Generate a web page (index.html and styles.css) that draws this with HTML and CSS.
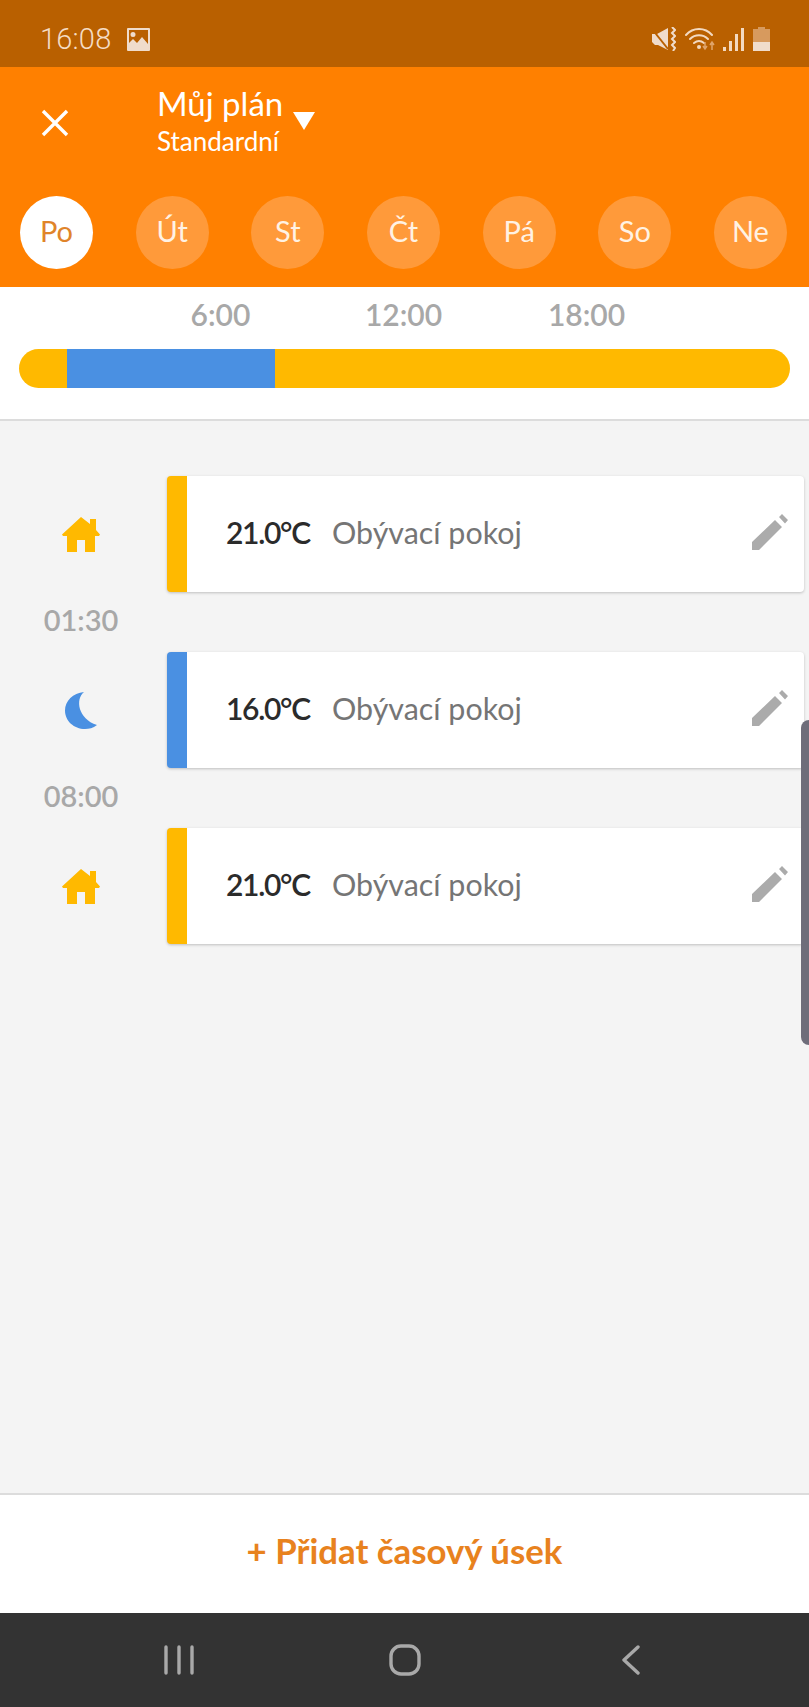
FILE: index.html
```html
<!DOCTYPE html>
<html lang="cs">
<head>
<meta charset="utf-8">
<title>Můj plán</title>
<link rel="stylesheet" href="styles.css">
</head>
<body>
<div class="screen">
  <div class="status">
    <div class="status-left">
      <span class="clock">16:08</span>
      <svg class="ic-image" viewBox="0 0 23 23"><path fill="#f0dccb" fill-rule="evenodd" d="M1 0h21a1 1 0 0 1 1 1v21a1 1 0 0 1-1 1H1a1 1 0 0 1-1-1V1a1 1 0 0 1 1-1zM2 2v13l4-4 4 4 5-6 6 7V2zM6 4a2.500 2.500 0 1 1 0 5 2.500 2.500 0 0 1 0-5z"/></svg>
    </div>
    <div class="status-right">
      <svg class="ic-mute" viewBox="0 0 24 24"><path fill="#f0dccb" d="M0 7h5l11-6v22L6 18H3L0 15z"/><path d="M0 2l16 20" stroke="#b96000" stroke-width="2"/><path d="M20 0l3 3-3 3 3 3-3 3 3 3-3 3 3 3-2 3" fill="none" stroke="#f0dccb" stroke-width="2"/></svg>
      <svg class="ic-wifi" viewBox="0 0 30 24"><g fill="none" stroke="#f3d9c0" stroke-width="2" stroke-linecap="round"><path d="M1 8c7-8 19-8 26 0"/><path d="M5 12c5-5 13-5 18 0"/><path d="M9 16c3-2.500 7-2.500 10 0"/></g><circle cx="14" cy="20" r="2" fill="#f3d9c0"/><path d="M20 15v7m-2-3l2 3 2-3M27 23v-8m-2 3l2-3 2 3" fill="none" stroke="#e0a56c" stroke-width="1.500"/></svg>
      <svg class="ic-signal" viewBox="0 0 21 23"><g fill="#f3d9c0"><rect x="0" y="19" width="3" height="4"/><rect x="6" y="13" width="3" height="10"/><rect x="12" y="6" width="3" height="17"/><rect x="18" y="0" width="3" height="23"/></g></svg>
      <svg class="ic-battery" viewBox="0 0 17 24"><path fill="#d79a5e" d="M5 0h7v2h5v22H0V2h5z"/><rect y="15" width="17" height="9" fill="#f0dccb"/></svg>
    </div>
  </div>

  <header class="app-header">
    <div class="title-row">
      <svg class="ic-close" viewBox="0 0 28 28"><path d="M2 2l24 24M26 2L2 26" stroke="#fff" stroke-width="3.400" fill="none"/></svg>
      <div class="titles">
        <div class="title">Můj plán</div>
        <div class="subtitle">Standardní</div>
      </div>
      <span class="caret"></span>
    </div>
    <div class="days">
      <div class="day day-active">Po</div>
      <div class="day">Út</div>
      <div class="day">St</div>
      <div class="day">Čt</div>
      <div class="day">Pá</div>
      <div class="day">So</div>
      <div class="day">Ne</div>
    </div>
  </header>

  <section class="timeline">
    <div class="hours">
      <span>6:00</span>
      <span>12:00</span>
      <span>18:00</span>
    </div>
    <div class="bar">
      <span class="seg seg-home" style="width:48px"></span>
      <span class="seg seg-night" style="width:208px"></span>
      <span class="seg seg-home seg-fill"></span>
    </div>
  </section>

  <main class="schedule">
    <div class="row">
      <div class="row-icon">
        <svg class="ic-home" viewBox="0 0 38 35"><path fill="#ffb900" d="M19 0l9 7V2h6v11l4 4.500-1 1.500h-4v16H23V23h-8v12H5V19H1l-1-1.500z"/></svg>
      </div>
      <div class="card card-home">
        <span class="temp">21.0°C</span><span class="room">Obývací pokoj</span>
        <svg class="ic-edit" viewBox="0 0 36 36"><path fill="#ababab" d="M0 28L23 6l7 7L7 36H0zM27 3l3-3 6 6-3 3.500z"/></svg>
      </div>
    </div>
    <div class="time">01:30</div>
    <div class="row">
      <div class="row-icon">
        <svg class="ic-moon" viewBox="0 0 32 37"><path fill="#4a90e2" d="M19 0C10 7 13 27 32 33c-4 3-8 4-12 4C9 37 0 29 0 18.500 0 9 8 1 19 0z"/></svg>
      </div>
      <div class="card card-night">
        <span class="temp">16.0°C</span><span class="room">Obývací pokoj</span>
        <svg class="ic-edit" viewBox="0 0 36 36"><path fill="#ababab" d="M0 28L23 6l7 7L7 36H0zM27 3l3-3 6 6-3 3.500z"/></svg>
      </div>
    </div>
    <div class="time">08:00</div>
    <div class="row">
      <div class="row-icon">
        <svg class="ic-home" viewBox="0 0 38 35"><path fill="#ffb900" d="M19 0l9 7V2h6v11l4 4.500-1 1.500h-4v16H23V23h-8v12H5V19H1l-1-1.500z"/></svg>
      </div>
      <div class="card card-home">
        <span class="temp">21.0°C</span><span class="room">Obývací pokoj</span>
        <svg class="ic-edit" viewBox="0 0 36 36"><path fill="#ababab" d="M0 28L23 6l7 7L7 36H0zM27 3l3-3 6 6-3 3.500z"/></svg>
      </div>
    </div>
  </main>

  <div class="add">+ Přidat časový úsek</div>

  <nav class="navbar">
    <svg class="ic-recent" viewBox="0 0 30 30"><path d="M2 2v26M15 2v26M28 2v26" stroke="#a9a9a9" stroke-width="3.400" stroke-linecap="round" fill="none"/></svg>
    <svg class="ic-homebtn" viewBox="0 0 32 32"><rect x="2" y="2" width="28" height="28" rx="10" fill="none" stroke="#a9a9a9" stroke-width="3.400"/></svg>
    <svg class="ic-back" viewBox="0 0 18 30"><path d="M16 2L2 15l14 13" stroke="#a9a9a9" stroke-width="3.400" stroke-linecap="round" stroke-linejoin="round" fill="none"/></svg>
  </nav>

  <div class="edge-handle"></div>
</div>
</body>
</html>
```

FILE: styles.css
```css
* { box-sizing: border-box; }
html, body { margin: 0; padding: 0; }
body { font-family: "Lato", "Liberation Sans", sans-serif; background: #f4f4f4; }
.screen { position: relative; width: 809px; height: 1707px; display: flex; flex-direction: column; overflow: hidden; }

.status { height: 67px; flex: none; background: #b96000; display: flex; justify-content: space-between; align-items: center; padding: 11px 39px 0 40px; }
.status-left, .status-right { display: flex; align-items: center; }
.clock { font-family: "Roboto", sans-serif; font-size: 29px; font-weight: 300; color: #f5dcc4; letter-spacing: .2px; }
.ic-image { width: 23px; height: 23px; margin-left: 16px; }
.ic-mute { width: 24px; height: 24px; }
.ic-wifi { width: 30px; height: 24px; margin-left: 9px; }
.ic-signal { width: 21px; height: 23px; margin-left: 8px; }
.ic-battery { width: 17px; height: 24px; margin-left: 9px; }

.app-header { height: 220px; flex: none; background: #ff8000; color: #fff; padding: 0 22px 0 20px; }
.title-row { height: 129px; display: flex; align-items: center; padding-left: 21px; }
.ic-close { width: 28px; height: 28px; margin-top: -17px; }
.titles { margin-left: 88px; margin-top: -22px; }
.title { font-size: 33px; line-height: 40px; }
.subtitle { font-size: 26px; line-height: 34px; margin-top: 1px; }
.caret { width: 0; height: 0; margin: -22px 0 0 10px; border-left: 11px solid transparent; border-right: 11px solid transparent; border-top: 18px solid #fff; }
.days { display: flex; justify-content: space-between; }
.day { width: 73px; height: 73px; border-radius: 50%; background: #ff9a3a; display: flex; align-items: center; justify-content: center; font-size: 29px; padding-bottom: 5px; color: #fff2e4; }
.day-active { background: #fff; color: #e0842a; }

.timeline { height: 134px; flex: none; background: #fff; border-bottom: 2px solid #dcdcdc; padding: 0 19px; }
.hours { height: 62px; display: flex; padding: 8px 0 0 110px; font-size: 30px; line-height: 38px; color: #a8a8a8; font-weight: 600; }
.hours span { width: 183px; text-align: center; }
.bar { height: 39px; display: flex; border-radius: 20px; overflow: hidden; }
.seg { display: block; }
.seg-home { background: #ffb900; }
.seg-night { background: #4a90e2; }
.seg-fill { flex: 1; }

.schedule { flex: 1; padding: 55px 5px 0 0; }
.row { display: flex; height: 116px; }
.row-icon { width: 167px; padding-right: 5px; display: flex; align-items: center; justify-content: center; }
.ic-home { width: 38px; height: 35px; }
.ic-moon { width: 32px; height: 37px; }
.card { flex: 1; background: #fff; display: flex; align-items: center; border-radius: 4px; border-left: 20px solid; padding: 0 16px 5px 39px; box-shadow: 0 1px 3px rgba(0,0,0,.22); }
.card-home { border-left-color: #ffb900; }
.card-night { border-left-color: #4a90e2; }
.temp { font-size: 30px; font-weight: 600; color: #2b2b2b; width: 106px; letter-spacing: -1.300px; }
.room { font-size: 30.400px; color: #757575; flex: 1; }
.ic-edit { width: 36px; height: 36px; }
.time { height: 60px; width: 162px; display: flex; align-items: center; justify-content: center; padding-bottom: 6px; font-size: 29px; font-weight: 600; color: #a8a8a8; }

.add { height: 120px; flex: none; background: #fff; border-top: 2px solid #dcdcdc; display: flex; align-items: center; justify-content: center; padding-bottom: 8px; font-size: 34.800px; font-weight: 700; color: #e8821e; }

.navbar { height: 94px; flex: none; background: #333; display: flex; align-items: center; padding: 0 169px 0 164px; justify-content: space-between; }
.ic-recent { width: 30px; height: 30px; }
.ic-homebtn { width: 32px; height: 32px; margin-left: -6px; }
.ic-back { width: 18px; height: 30px; }

.edge-handle { position: absolute; right: 0; top: 720px; width: 8px; height: 325px; background: #6e6d7a; border-radius: 8px 0 0 8px; }
```
